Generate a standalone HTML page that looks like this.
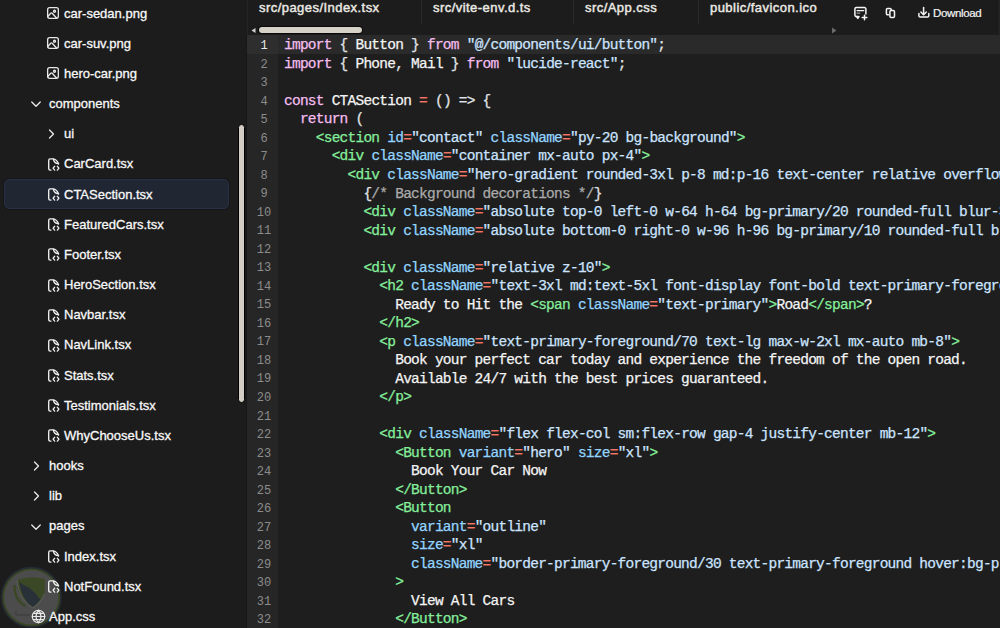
<!DOCTYPE html>
<html><head><meta charset="utf-8"><style>
*{margin:0;padding:0;box-sizing:border-box}
html,body{width:1000px;height:628px;overflow:hidden;background:#1c1c1c}
body{position:relative;font-family:"Liberation Sans",sans-serif}
#side{position:absolute;left:0;top:0;width:247px;height:628px;background:#1c1c1c;overflow:hidden}
.it{position:absolute;left:0;width:247px;height:30.17px}
.icw{position:absolute;top:0;height:30.17px;display:flex;align-items:center}
.ic{display:block}
.nm{position:absolute;top:0.6px;line-height:30.17px;font-size:13px;color:#f8f8f8;white-space:nowrap;-webkit-text-stroke:0.3px currentColor}
#sel{position:absolute;left:4px;top:179px;width:225px;height:30px;border-radius:5px;background:#212633;border:1px solid #283046;box-shadow:0 0 0 1px #161616}
#vthumb{position:absolute;left:238px;top:123.5px;width:7px;height:279px;border-radius:4px;background:#d2cec6;border:1px solid #000}
#tabs{position:absolute;left:247px;top:0;width:753px;height:25px;background:#1c1c1c}
.tab{position:absolute;top:-4.2px;height:25px;line-height:24px;font-size:13px;font-weight:normal;letter-spacing:0.45px;-webkit-text-stroke:0.45px currentColor;color:#ebe9e3;white-space:nowrap}
.sep{position:absolute;top:0;width:1px;height:24px;background:#2a2a2a}
#hbar{position:absolute;left:247px;top:25px;width:753px;height:10px;background:#1c1c1c}
#hthumb{position:absolute;left:259px;top:26.8px;width:103px;height:6px;border-radius:3px;background:#d6d2c8;box-shadow:0 0 0 1px #0a0a0a}
#code{position:absolute;left:247px;top:35px;width:753px;height:593px;background:#1e1e1e;overflow:hidden}
#gut{position:absolute;left:0;top:0;width:31px;height:593px;background:#262626}
#vline{position:absolute;left:246px;top:35px;width:1px;height:593px;background:#171717}
#vline2{position:absolute;left:247px;top:0;width:1px;height:35px;background:#242424}
.gn{height:18.52px;line-height:18.52px;text-align:center;padding-left:3px;font-family:"Liberation Mono",monospace;font-size:12px;color:#8c8c8c}
.gn.cur{color:#e8e8e8}
#hlg{position:absolute;left:0;top:0;width:31px;height:19px;background:#2e2e2e}
#hlc{position:absolute;left:31px;top:0;width:722px;height:19px;background:#2a2a2a}
#lines{position:absolute;left:31px;top:0;width:722px}
.ln{height:18.52px;line-height:18.52px;padding-left:6px;font-family:"Liberation Mono",monospace;font-size:14.5px;letter-spacing:-0.76px;color:#e1e4e8;white-space:pre;-webkit-text-stroke:0.25px currentColor}

.gtxt{position:relative;top:2.2px}
.k{color:#f5bdf0} .t{color:#85ef9b} .a{color:#93d5ff} .s{color:#cce4ff} .o{color:#f47766} .c{color:#ababab} .x{color:#f4f4f4}
#tools{position:absolute;top:0;left:840px;height:25px}
#dl{position:absolute;left:933px;top:0.8px;line-height:25px;font-size:11.5px;color:#f4f4f4;letter-spacing:-0.35px;white-space:nowrap;-webkit-text-stroke:0.2px currentColor}
#wm{position:absolute;left:0;top:564px}
</style></head><body>
<div id="side">
<svg id="wm" width="64" height="64" viewBox="0 0 64 64"><circle cx="31.3" cy="33.3" r="30.5" fill="#262c33"/><circle cx="31.3" cy="33.3" r="28.8" fill="#3a4724"/><circle cx="31.3" cy="33.3" r="27.2" fill="#4c4c4c"/><path d="M14.5 21Q14 36 25.5 42" stroke="#3a4724" stroke-width="2.2" fill="none"/><path d="M17 16Q30 11 45 15L44.5 30Q42 38 33 44Q22 38 17.5 25Z" fill="#3b4825"/><path d="M19.2 18Q24 22 29 23.5Q35 28 40.2 35.4Q37 40 32.5 43Q22 36 19.2 18Z" fill="#283038"/><path d="M17 16Q19 36 33 44Q42 38 44.5 30" stroke="#5a5a5a" stroke-width="1.2" fill="none"/><path d="M16 47v4h14" stroke="#3a3a3a" stroke-width="1" fill="none"/></svg>
<div id="sel"></div>
<div class="it" style="top:-2.10px"><span class="icw" style="left:47px"><svg class="ic" width="12" height="12" viewBox="0 0 24 24" fill="none" stroke="#e8e8e8" stroke-width="2.6" stroke-linecap="round" stroke-linejoin="round"><rect x="1.3" y="1.3" width="21.4" height="21.4" rx="4"/><circle cx="15" cy="8.5" r="2"/><path d="M1.5 19L7.5 12.5Q9 11 10.5 12.5L19 22"/></svg></span><span class="nm" style="left:64px">car-sedan.png</span></div><div class="it" style="top:28.07px"><span class="icw" style="left:47px"><svg class="ic" width="12" height="12" viewBox="0 0 24 24" fill="none" stroke="#e8e8e8" stroke-width="2.6" stroke-linecap="round" stroke-linejoin="round"><rect x="1.3" y="1.3" width="21.4" height="21.4" rx="4"/><circle cx="15" cy="8.5" r="2"/><path d="M1.5 19L7.5 12.5Q9 11 10.5 12.5L19 22"/></svg></span><span class="nm" style="left:64px">car-suv.png</span></div><div class="it" style="top:58.24px"><span class="icw" style="left:47px"><svg class="ic" width="12" height="12" viewBox="0 0 24 24" fill="none" stroke="#e8e8e8" stroke-width="2.6" stroke-linecap="round" stroke-linejoin="round"><rect x="1.3" y="1.3" width="21.4" height="21.4" rx="4"/><circle cx="15" cy="8.5" r="2"/><path d="M1.5 19L7.5 12.5Q9 11 10.5 12.5L19 22"/></svg></span><span class="nm" style="left:64px">hero-car.png</span></div><div class="it" style="top:88.41px"><span class="icw" style="left:30px"><svg class="ic" style="margin-top:1.5px" width="12" height="12" viewBox="0 0 24 24" fill="none" stroke="#ececec" stroke-width="2.5" stroke-linecap="round" stroke-linejoin="round"><path d="M3.5 8L12 16.5 20.5 8"/></svg></span><span class="nm" style="left:49px">components</span></div><div class="it" style="top:118.58px"><span class="icw" style="left:45px"><svg class="ic" width="12" height="12" viewBox="0 0 24 24" fill="none" stroke="#ececec" stroke-width="2.5" stroke-linecap="round" stroke-linejoin="round"><path d="M9 4l8 8-8 8"/></svg></span><span class="nm" style="left:64px">ui</span></div><div class="it" style="top:148.75px"><span class="icw" style="left:47px"><svg class="ic" width="13" height="14" viewBox="0 0 26 28" fill="none" stroke="#f0f0f0" stroke-width="2.7" stroke-linecap="round" stroke-linejoin="round"><path d="M8 26.2H6.4a3 3 0 0 1-3-3V6.8a3 3 0 0 1 3-3H12Q20 5 23 13.4V14.2"/><path d="M13 4.2Q13.5 12.2 23 13.4"/><path d="M15.2 18.6l-3 3.8 3 3.8"/><path d="M20.8 18.6l3 3.8-3 3.8"/></svg></span><span class="nm" style="left:64px">CarCard.tsx</span></div><div class="it" style="top:178.92px"><span class="icw" style="left:47px"><svg class="ic" width="13" height="14" viewBox="0 0 26 28" fill="none" stroke="#f0f0f0" stroke-width="2.7" stroke-linecap="round" stroke-linejoin="round"><path d="M8 26.2H6.4a3 3 0 0 1-3-3V6.8a3 3 0 0 1 3-3H12Q20 5 23 13.4V14.2"/><path d="M13 4.2Q13.5 12.2 23 13.4"/><path d="M15.2 18.6l-3 3.8 3 3.8"/><path d="M20.8 18.6l3 3.8-3 3.8"/></svg></span><span class="nm" style="left:64px">CTASection.tsx</span></div><div class="it" style="top:209.09px"><span class="icw" style="left:47px"><svg class="ic" width="13" height="14" viewBox="0 0 26 28" fill="none" stroke="#f0f0f0" stroke-width="2.7" stroke-linecap="round" stroke-linejoin="round"><path d="M8 26.2H6.4a3 3 0 0 1-3-3V6.8a3 3 0 0 1 3-3H12Q20 5 23 13.4V14.2"/><path d="M13 4.2Q13.5 12.2 23 13.4"/><path d="M15.2 18.6l-3 3.8 3 3.8"/><path d="M20.8 18.6l3 3.8-3 3.8"/></svg></span><span class="nm" style="left:64px">FeaturedCars.tsx</span></div><div class="it" style="top:239.26px"><span class="icw" style="left:47px"><svg class="ic" width="13" height="14" viewBox="0 0 26 28" fill="none" stroke="#f0f0f0" stroke-width="2.7" stroke-linecap="round" stroke-linejoin="round"><path d="M8 26.2H6.4a3 3 0 0 1-3-3V6.8a3 3 0 0 1 3-3H12Q20 5 23 13.4V14.2"/><path d="M13 4.2Q13.5 12.2 23 13.4"/><path d="M15.2 18.6l-3 3.8 3 3.8"/><path d="M20.8 18.6l3 3.8-3 3.8"/></svg></span><span class="nm" style="left:64px">Footer.tsx</span></div><div class="it" style="top:269.43px"><span class="icw" style="left:47px"><svg class="ic" width="13" height="14" viewBox="0 0 26 28" fill="none" stroke="#f0f0f0" stroke-width="2.7" stroke-linecap="round" stroke-linejoin="round"><path d="M8 26.2H6.4a3 3 0 0 1-3-3V6.8a3 3 0 0 1 3-3H12Q20 5 23 13.4V14.2"/><path d="M13 4.2Q13.5 12.2 23 13.4"/><path d="M15.2 18.6l-3 3.8 3 3.8"/><path d="M20.8 18.6l3 3.8-3 3.8"/></svg></span><span class="nm" style="left:64px">HeroSection.tsx</span></div><div class="it" style="top:299.60px"><span class="icw" style="left:47px"><svg class="ic" width="13" height="14" viewBox="0 0 26 28" fill="none" stroke="#f0f0f0" stroke-width="2.7" stroke-linecap="round" stroke-linejoin="round"><path d="M8 26.2H6.4a3 3 0 0 1-3-3V6.8a3 3 0 0 1 3-3H12Q20 5 23 13.4V14.2"/><path d="M13 4.2Q13.5 12.2 23 13.4"/><path d="M15.2 18.6l-3 3.8 3 3.8"/><path d="M20.8 18.6l3 3.8-3 3.8"/></svg></span><span class="nm" style="left:64px">Navbar.tsx</span></div><div class="it" style="top:329.77px"><span class="icw" style="left:47px"><svg class="ic" width="13" height="14" viewBox="0 0 26 28" fill="none" stroke="#f0f0f0" stroke-width="2.7" stroke-linecap="round" stroke-linejoin="round"><path d="M8 26.2H6.4a3 3 0 0 1-3-3V6.8a3 3 0 0 1 3-3H12Q20 5 23 13.4V14.2"/><path d="M13 4.2Q13.5 12.2 23 13.4"/><path d="M15.2 18.6l-3 3.8 3 3.8"/><path d="M20.8 18.6l3 3.8-3 3.8"/></svg></span><span class="nm" style="left:64px">NavLink.tsx</span></div><div class="it" style="top:359.94px"><span class="icw" style="left:47px"><svg class="ic" width="13" height="14" viewBox="0 0 26 28" fill="none" stroke="#f0f0f0" stroke-width="2.7" stroke-linecap="round" stroke-linejoin="round"><path d="M8 26.2H6.4a3 3 0 0 1-3-3V6.8a3 3 0 0 1 3-3H12Q20 5 23 13.4V14.2"/><path d="M13 4.2Q13.5 12.2 23 13.4"/><path d="M15.2 18.6l-3 3.8 3 3.8"/><path d="M20.8 18.6l3 3.8-3 3.8"/></svg></span><span class="nm" style="left:64px">Stats.tsx</span></div><div class="it" style="top:390.11px"><span class="icw" style="left:47px"><svg class="ic" width="13" height="14" viewBox="0 0 26 28" fill="none" stroke="#f0f0f0" stroke-width="2.7" stroke-linecap="round" stroke-linejoin="round"><path d="M8 26.2H6.4a3 3 0 0 1-3-3V6.8a3 3 0 0 1 3-3H12Q20 5 23 13.4V14.2"/><path d="M13 4.2Q13.5 12.2 23 13.4"/><path d="M15.2 18.6l-3 3.8 3 3.8"/><path d="M20.8 18.6l3 3.8-3 3.8"/></svg></span><span class="nm" style="left:64px">Testimonials.tsx</span></div><div class="it" style="top:420.28px"><span class="icw" style="left:47px"><svg class="ic" width="13" height="14" viewBox="0 0 26 28" fill="none" stroke="#f0f0f0" stroke-width="2.7" stroke-linecap="round" stroke-linejoin="round"><path d="M8 26.2H6.4a3 3 0 0 1-3-3V6.8a3 3 0 0 1 3-3H12Q20 5 23 13.4V14.2"/><path d="M13 4.2Q13.5 12.2 23 13.4"/><path d="M15.2 18.6l-3 3.8 3 3.8"/><path d="M20.8 18.6l3 3.8-3 3.8"/></svg></span><span class="nm" style="left:64px">WhyChooseUs.tsx</span></div><div class="it" style="top:450.45px"><span class="icw" style="left:30px"><svg class="ic" width="12" height="12" viewBox="0 0 24 24" fill="none" stroke="#ececec" stroke-width="2.5" stroke-linecap="round" stroke-linejoin="round"><path d="M9 4l8 8-8 8"/></svg></span><span class="nm" style="left:49px">hooks</span></div><div class="it" style="top:480.62px"><span class="icw" style="left:30px"><svg class="ic" width="12" height="12" viewBox="0 0 24 24" fill="none" stroke="#ececec" stroke-width="2.5" stroke-linecap="round" stroke-linejoin="round"><path d="M9 4l8 8-8 8"/></svg></span><span class="nm" style="left:49px">lib</span></div><div class="it" style="top:510.79px"><span class="icw" style="left:30px"><svg class="ic" style="margin-top:1.5px" width="12" height="12" viewBox="0 0 24 24" fill="none" stroke="#ececec" stroke-width="2.5" stroke-linecap="round" stroke-linejoin="round"><path d="M3.5 8L12 16.5 20.5 8"/></svg></span><span class="nm" style="left:49px">pages</span></div><div class="it" style="top:540.96px"><span class="icw" style="left:47px"><svg class="ic" width="13" height="14" viewBox="0 0 26 28" fill="none" stroke="#f0f0f0" stroke-width="2.7" stroke-linecap="round" stroke-linejoin="round"><path d="M8 26.2H6.4a3 3 0 0 1-3-3V6.8a3 3 0 0 1 3-3H12Q20 5 23 13.4V14.2"/><path d="M13 4.2Q13.5 12.2 23 13.4"/><path d="M15.2 18.6l-3 3.8 3 3.8"/><path d="M20.8 18.6l3 3.8-3 3.8"/></svg></span><span class="nm" style="left:64px">Index.tsx</span></div><div class="it" style="top:571.13px"><span class="icw" style="left:47px"><svg class="ic" width="13" height="14" viewBox="0 0 26 28" fill="none" stroke="#f0f0f0" stroke-width="2.7" stroke-linecap="round" stroke-linejoin="round"><path d="M8 26.2H6.4a3 3 0 0 1-3-3V6.8a3 3 0 0 1 3-3H12Q20 5 23 13.4V14.2"/><path d="M13 4.2Q13.5 12.2 23 13.4"/><path d="M15.2 18.6l-3 3.8 3 3.8"/><path d="M20.8 18.6l3 3.8-3 3.8"/></svg></span><span class="nm" style="left:64px">NotFound.tsx</span></div><div class="it" style="top:601.30px"><span class="icw" style="left:30.5px"><svg class="ic" width="15" height="15" viewBox="0 0 24 24" fill="none" stroke="#e8e8e8" stroke-width="1.9" stroke-linecap="round" stroke-linejoin="round"><circle cx="12" cy="12" r="10"/><path d="M12 2a14.5 14.5 0 0 0 0 20 14.5 14.5 0 0 0 0-20"/><path d="M2 12h20"/><path d="M4 7h16M4 17h16"/></svg></span><span class="nm" style="left:49px">App.css</span></div>
<div id="vthumb"></div>
</div>
<div id="tabs">
<div class="tab" style="left:12px">src/pages/Index.tsx</div>
<div class="sep" style="left:174px"></div>
<div class="tab" style="left:186px">src/vite-env.d.ts</div>
<div class="sep" style="left:326px"></div>
<div class="tab" style="left:338px">src/App.css</div>
<div class="sep" style="left:451px"></div>
<div class="tab" style="left:463px">public/favicon.ico</div>
</div>
<div id="hbar"><svg style="position:absolute;left:3.5px;top:3px" width="5" height="5" viewBox="0 0 5 5"><path d="M4.5 0L0.5 2.5 4.5 5z" fill="#d0d0d0"/></svg><svg style="position:absolute;left:584px;top:1.5px" width="6" height="7" viewBox="0 0 6 7"><path d="M1 0.5L5.5 3.5 1 6.5z" fill="#6a6a6a"/></svg></div>
<div id="hthumb"></div><div id="vline"></div><div id="vline2"></div><div style="position:absolute;left:997px;top:0;width:1px;height:628px;background:#191919"></div><div style="position:absolute;left:998px;top:0;width:2px;height:628px;background:#232323"></div>
<div id="code">
<div id="gut"><div id="hlg"></div><div class="gtxt"><div class="gn cur">1</div><div class="gn">2</div><div class="gn">3</div><div class="gn">4</div><div class="gn">5</div><div class="gn">6</div><div class="gn">7</div><div class="gn">8</div><div class="gn">9</div><div class="gn">10</div><div class="gn">11</div><div class="gn">12</div><div class="gn">13</div><div class="gn">14</div><div class="gn">15</div><div class="gn">16</div><div class="gn">17</div><div class="gn">18</div><div class="gn">19</div><div class="gn">20</div><div class="gn">21</div><div class="gn">22</div><div class="gn">23</div><div class="gn">24</div><div class="gn">25</div><div class="gn">26</div><div class="gn">27</div><div class="gn">28</div><div class="gn">29</div><div class="gn">30</div><div class="gn">31</div><div class="gn">32</div></div></div>
<div id="hlc"></div><div id="lines"><div class="gtxt" style="top:1.4px"><div class="ln cur"><span class="k">import</span> { <span class="x">Button</span> } <span class="k">from</span> <span class="s">&quot;@/components/ui/button&quot;</span>;</div><div class="ln"><span class="k">import</span> { <span class="x">Phone</span>, <span class="x">Mail</span> } <span class="k">from</span> <span class="s">&quot;lucide-react&quot;</span>;</div><div class="ln"></div><div class="ln"><span class="k">const</span> <span class="x">CTASection</span> <span class="o">=</span> () =&gt; {</div><div class="ln">  <span class="k">return</span> (</div><div class="ln">    <span class="t">&lt;section</span> <span class="a">id</span><span class="o">=</span><span class="s">&quot;contact&quot;</span> <span class="a">className</span><span class="o">=</span><span class="s">&quot;py-20 bg-background&quot;</span><span class="t">&gt;</span></div><div class="ln">      <span class="t">&lt;div</span> <span class="a">className</span><span class="o">=</span><span class="s">&quot;container mx-auto px-4&quot;</span><span class="t">&gt;</span></div><div class="ln">        <span class="t">&lt;div</span> <span class="a">className</span><span class="o">=</span><span class="s">&quot;hero-gradient rounded-3xl p-8 md:p-16 text-center relative overflow-hidden&quot;</span><span class="t">&gt;</span></div><div class="ln">          {<span class="c">/* Background decorations */</span>}</div><div class="ln">          <span class="t">&lt;div</span> <span class="a">className</span><span class="o">=</span><span class="s">&quot;absolute top-0 left-0 w-64 h-64 bg-primary/20 rounded-full blur-3xl&quot;</span><span class="t"> /&gt;</span></div><div class="ln">          <span class="t">&lt;div</span> <span class="a">className</span><span class="o">=</span><span class="s">&quot;absolute bottom-0 right-0 w-96 h-96 bg-primary/10 rounded-full blur-3xl&quot;</span><span class="t"> /&gt;</span></div><div class="ln"></div><div class="ln">          <span class="t">&lt;div</span> <span class="a">className</span><span class="o">=</span><span class="s">&quot;relative z-10&quot;</span><span class="t">&gt;</span></div><div class="ln">            <span class="t">&lt;h2</span> <span class="a">className</span><span class="o">=</span><span class="s">&quot;text-3xl md:text-5xl font-display font-bold text-primary-foreground mb-6&quot;</span><span class="t">&gt;</span></div><div class="ln">              <span class="x">Ready to Hit the </span><span class="t">&lt;span</span> <span class="a">className</span><span class="o">=</span><span class="s">&quot;text-primary&quot;</span><span class="t">&gt;</span><span class="x">Road</span><span class="t">&lt;/span&gt;</span><span class="x">?</span></div><div class="ln">            <span class="t">&lt;/h2&gt;</span></div><div class="ln">            <span class="t">&lt;p</span> <span class="a">className</span><span class="o">=</span><span class="s">&quot;text-primary-foreground/70 text-lg max-w-2xl mx-auto mb-8&quot;</span><span class="t">&gt;</span></div><div class="ln">              <span class="x">Book your perfect car today and experience the freedom of the open road.</span></div><div class="ln">              <span class="x">Available 24/7 with the best prices guaranteed.</span></div><div class="ln">            <span class="t">&lt;/p&gt;</span></div><div class="ln"></div><div class="ln">            <span class="t">&lt;div</span> <span class="a">className</span><span class="o">=</span><span class="s">&quot;flex flex-col sm:flex-row gap-4 justify-center mb-12&quot;</span><span class="t">&gt;</span></div><div class="ln">              <span class="t">&lt;Button</span> <span class="a">variant</span><span class="o">=</span><span class="s">&quot;hero&quot;</span> <span class="a">size</span><span class="o">=</span><span class="s">&quot;xl&quot;</span><span class="t">&gt;</span></div><div class="ln">                <span class="x">Book Your Car Now</span></div><div class="ln">              <span class="t">&lt;/Button&gt;</span></div><div class="ln">              <span class="t">&lt;Button</span></div><div class="ln">                <span class="a">variant</span><span class="o">=</span><span class="s">&quot;outline&quot;</span></div><div class="ln">                <span class="a">size</span><span class="o">=</span><span class="s">&quot;xl&quot;</span></div><div class="ln">                <span class="a">className</span><span class="o">=</span><span class="s">&quot;border-primary-foreground/30 text-primary-foreground hover:bg-primary-foreground/10&quot;</span></div><div class="ln">              <span class="t">&gt;</span></div><div class="ln">                <span class="x">View All Cars</span></div><div class="ln">              <span class="t">&lt;/Button&gt;</span></div></div></div>
</div>
<svg style="position:absolute;left:845px;top:0" width="60" height="25" viewBox="845 0 60 25" fill="none" stroke="#f6f6f6" stroke-width="1.5" stroke-linecap="round" stroke-linejoin="round"><path d="M858.3 16.6H856.4a1.5 1.5 0 0 1-1.5-1.5V9.1a1.5 1.5 0 0 1 1.5-1.5h8a1.5 1.5 0 0 1 1.5 1.5v4.8"/><path d="M856.6 16.6l1.2 1.8 1.2-1.8"/><path d="M857 10.6h6.8" stroke-width="1.2"/><path d="M857 13.1h2.8" stroke="#9a9a9a" stroke-width="1.25"/><path d="M862.2 17.4h4.6M864.5 15.2v4.5"/><path d="M891.2 10.3v-0.7a1.2 1.2 0 0 0-1.2-1.2h-2.4a1.2 1.2 0 0 0-1.2 1.2v3.9a1.2 1.2 0 0 0 1.2 1.2h0.8"/><rect x="889.9" y="10.5" width="4.6" height="6.9" rx="1.2"/></svg>
<svg style="position:absolute;left:910px;top:0" width="25" height="25" viewBox="910 0 25 25" fill="none" stroke="#f6f6f6" stroke-width="1.5" stroke-linecap="round" stroke-linejoin="round"><path d="M923.6 7.6v7"/><path d="M920.9 12l2.7 2.7 2.7-2.7"/><path d="M918.9 13.4v2.3a1.3 1.3 0 0 0 1.3 1.3h7.3a1.3 1.3 0 0 0 1.3-1.3v-2.3"/></svg>
<div id="dl">Download</div>
</body></html>
